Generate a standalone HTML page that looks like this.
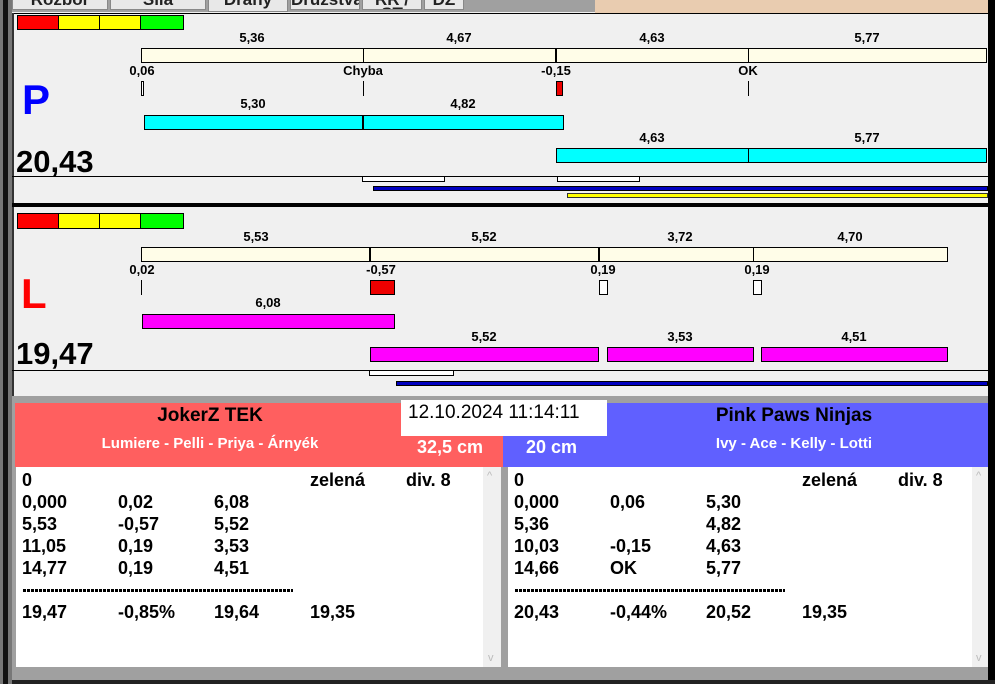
<!DOCTYPE html>
<html><head><meta charset="utf-8"><style>
*{margin:0;padding:0;box-sizing:border-box}
body{width:995px;height:684px;overflow:hidden;background:#f0f0f0;font-family:"Liberation Sans",Arial,sans-serif;position:relative}
div{position:absolute}
.b{border:1px solid #000}
.t{font-weight:bold;font-size:13px;color:#000;transform:translateX(-50%);white-space:nowrap;line-height:14px}
.L{font-weight:bold;font-size:18px;line-height:22px;white-space:nowrap}
.tab{background:#e8e8e8;border:1px solid #888;border-top:0;font-weight:bold;font-size:17px;line-height:14px;overflow:hidden;text-align:center;color:#222}
.tab span{position:relative;top:-7px}
.dash{height:3px;background:repeating-linear-gradient(90deg,#000 0 3px,transparent 3px 4px)}
</style></head><body>
<div style="left:0;top:0;width:12px;height:684px;background:#777"></div>
<div style="left:3px;top:0;width:5px;height:684px;background:#111"></div>
<div style="left:12px;top:0;width:583px;height:12px;background:#a0a0a0"></div>
<div class="tab" style="left:12px;top:0;width:96px;height:10px"><span>Rozbor</span></div>
<div class="tab" style="left:110px;top:0;width:96px;height:10px"><span>Síla</span></div>
<div class="tab" style="left:208px;top:0;width:80px;height:12px"><span>Dráhy</span></div>
<div class="tab" style="left:290px;top:0;width:70px;height:10px"><span>Družstva</span></div>
<div class="tab" style="left:362px;top:0;width:60px;height:10px"><span>RR / ST</span></div>
<div class="tab" style="left:424px;top:0;width:40px;height:10px"><span>DZ</span></div>
<div style="left:595px;top:0;width:393px;height:13px;background:#e9ccb0"></div>
<div style="left:988px;top:0;width:7px;height:684px;background:#000"></div>
<div style="left:12px;top:13px;width:976px;height:1px;background:#000"></div>
<div style="left:12px;top:13px;width:2px;height:385px;background:#333"></div>

<div style="left:17px;top:15px;width:42px;height:15px;background:#f00" class="b"></div>
<div style="left:58px;top:15px;width:42px;height:15px;background:#ff0" class="b"></div>
<div style="left:99px;top:15px;width:42px;height:15px;background:#ff0" class="b"></div>
<div style="left:140px;top:15px;width:44px;height:15px;background:#0f0" class="b"></div>

<div class="t" style="left:252px;top:31px">5,36</div><div class="t" style="left:459px;top:31px">4,67</div><div class="t" style="left:652px;top:31px">4,63</div><div class="t" style="left:867px;top:31px">5,77</div>
<div class="b" style="left:141px;top:48px;width:846px;height:15px;background:#fffde8"></div>
<div style="left:363px;top:48px;width:1px;height:15px;background:#000"></div>
<div style="left:555px;top:48px;width:2px;height:15px;background:#000"></div>
<div style="left:748px;top:48px;width:1px;height:15px;background:#000"></div>
<div class="t" style="left:142px;top:64px">0,06</div><div class="t" style="left:363px;top:64px">Chyba</div><div class="t" style="left:556px;top:64px">-0,15</div><div class="t" style="left:748px;top:64px">OK</div>
<div class="b" style="left:141px;top:81px;width:3px;height:15px;background:#fff"></div>
<div style="left:363px;top:81px;width:1px;height:15px;background:#000"></div>
<div class="b" style="left:556px;top:81px;width:7px;height:15px;background:#e00"></div>
<div style="left:748px;top:81px;width:1px;height:15px;background:#000"></div>
<div style="left:22px;top:76px;font-size:42px;font-weight:bold;color:#0000ff;line-height:48px">P</div>
<div class="t" style="left:253px;top:97px">5,30</div><div class="t" style="left:463px;top:97px">4,82</div>
<div class="b" style="left:144px;top:115px;width:420px;height:15px;background:#0ff"></div>
<div style="left:362px;top:115px;width:2px;height:15px;background:#000"></div>
<div class="t" style="left:652px;top:131px">4,63</div><div class="t" style="left:867px;top:131px">5,77</div>
<div class="b" style="left:556px;top:148px;width:431px;height:15px;background:#0ff"></div>
<div style="left:748px;top:148px;width:1px;height:15px;background:#000"></div>
<div style="left:16px;top:144px;font-size:31px;font-weight:bold;line-height:36px">20,43</div>
<div style="left:12px;top:176px;width:976px;height:1px;background:#000"></div>
<div class="b" style="left:362px;top:176px;width:83px;height:6px;background:#fff"></div>
<div class="b" style="left:557px;top:176px;width:83px;height:6px;background:#fff"></div>
<div style="left:373px;top:186px;width:615px;height:5px;background:#0000c0;border:1px solid #000"></div>
<div style="left:567px;top:193px;width:421px;height:5px;background:#ff0;border:1px solid #333"></div>
<div style="left:12px;top:203px;width:976px;height:4px;background:#000"></div>

<div style="left:17px;top:213px;width:42px;height:16px;background:#f00" class="b"></div>
<div style="left:58px;top:213px;width:42px;height:16px;background:#ff0" class="b"></div>
<div style="left:99px;top:213px;width:42px;height:16px;background:#ff0" class="b"></div>
<div style="left:140px;top:213px;width:44px;height:16px;background:#0f0" class="b"></div>
<div class="t" style="left:256px;top:230px">5,53</div><div class="t" style="left:484px;top:230px">5,52</div><div class="t" style="left:680px;top:230px">3,72</div><div class="t" style="left:850px;top:230px">4,70</div>
<div class="b" style="left:141px;top:247px;width:807px;height:15px;background:#fffde8"></div>
<div style="left:369px;top:247px;width:2px;height:15px;background:#000"></div>
<div style="left:598px;top:247px;width:2px;height:15px;background:#000"></div>
<div style="left:753px;top:247px;width:1px;height:15px;background:#000"></div>
<div class="t" style="left:142px;top:263px">0,02</div><div class="t" style="left:381px;top:263px">-0,57</div><div class="t" style="left:603px;top:263px">0,19</div><div class="t" style="left:757px;top:263px">0,19</div>
<div style="left:141px;top:280px;width:1px;height:15px;background:#000"></div>
<div class="b" style="left:370px;top:280px;width:25px;height:15px;background:#e00"></div>
<div class="b" style="left:599px;top:280px;width:9px;height:15px;background:#fff"></div>
<div class="b" style="left:753px;top:280px;width:9px;height:15px;background:#fff"></div>
<div style="left:21px;top:270px;font-size:42px;color:#f00;font-weight:bold;line-height:48px">L</div>
<div class="t" style="left:268px;top:296px">6,08</div>
<div class="b" style="left:142px;top:314px;width:253px;height:15px;background:#f0f"></div>
<div class="t" style="left:484px;top:330px">5,52</div><div class="t" style="left:680px;top:330px">3,53</div><div class="t" style="left:854px;top:330px">4,51</div>
<div class="b" style="left:370px;top:347px;width:229px;height:15px;background:#f0f"></div>
<div class="b" style="left:607px;top:347px;width:147px;height:15px;background:#f0f"></div>
<div class="b" style="left:761px;top:347px;width:187px;height:15px;background:#f0f"></div>
<div style="left:16px;top:336px;font-size:31px;font-weight:bold;line-height:36px">19,47</div>
<div style="left:12px;top:370px;width:976px;height:1px;background:#000"></div>
<div class="b" style="left:369px;top:370px;width:85px;height:6px;background:#fff"></div>
<div style="left:396px;top:381px;width:592px;height:5px;background:#0000c0;border:1px solid #000"></div>

<div style="left:12px;top:396px;width:976px;height:288px;background:#a0a0a0"></div>
<div style="left:15px;top:403px;width:488px;height:64px;background:#ff5f5f"></div>
<div style="left:503px;top:403px;width:485px;height:64px;background:#6060ff"></div>
<div style="left:15px;top:404px;width:390px;text-align:center;font-weight:bold;font-size:19px;line-height:24px">JokerZ TEK</div>
<div style="left:15px;top:435px;width:390px;text-align:center;font-weight:bold;font-size:15px;color:#fff;line-height:18px">Lumiere - Pelli - Priya - Árnyék</div>
<div style="left:417px;top:436px;font-weight:bold;font-size:18px;color:#fff;line-height:22px">32,5 cm</div>
<div style="left:526px;top:436px;font-weight:bold;font-size:18px;color:#fff;line-height:22px">20 cm</div>
<div style="left:600px;top:404px;width:388px;text-align:center;font-weight:bold;font-size:19px;line-height:24px">Pink Paws Ninjas</div>
<div style="left:600px;top:435px;width:388px;text-align:center;font-weight:bold;font-size:15px;color:#fff;line-height:18px">Ivy - Ace - Kelly - Lotti</div>
<div style="left:401px;top:400px;width:206px;height:36px;background:#fff;font-size:19px;line-height:24px;padding:1px 0 0 7px">12.10.2024 11:14:11</div>

<div style="left:16px;top:467px;width:485px;height:200px;background:#fff"></div>
<div style="left:483px;top:467px;width:18px;height:200px;background:#f0f0f0;color:#bbb;font-size:11px;text-align:center;line-height:14px"><span style="position:absolute;top:2px;left:4px">^</span><span style="position:absolute;top:184px;left:5px">v</span></div>
<div style="left:508px;top:467px;width:480px;height:200px;background:#fff"></div>
<div style="left:972px;top:467px;width:16px;height:200px;background:#f0f0f0;color:#bbb;font-size:11px;line-height:14px"><span style="position:absolute;top:2px;left:4px">^</span><span style="position:absolute;top:184px;left:4px">v</span></div>

<div class="L" style="left:22px;top:469px">0</div><div class="L" style="left:310px;top:469px">zelená</div><div class="L" style="left:406px;top:469px">div. 8</div>
<div class="L" style="left:22px;top:491px">0,000</div><div class="L" style="left:118px;top:491px">0,02</div><div class="L" style="left:214px;top:491px">6,08</div>
<div class="L" style="left:22px;top:513px">5,53</div><div class="L" style="left:118px;top:513px">-0,57</div><div class="L" style="left:214px;top:513px">5,52</div>
<div class="L" style="left:22px;top:535px">11,05</div><div class="L" style="left:118px;top:535px">0,19</div><div class="L" style="left:214px;top:535px">3,53</div>
<div class="L" style="left:22px;top:557px">14,77</div><div class="L" style="left:118px;top:557px">0,19</div><div class="L" style="left:214px;top:557px">4,51</div>
<div class="dash" style="left:23px;top:589px;width:270px"></div>
<div class="L" style="left:22px;top:601px">19,47</div><div class="L" style="left:118px;top:601px">-0,85%</div><div class="L" style="left:214px;top:601px">19,64</div><div class="L" style="left:310px;top:601px">19,35</div>

<div class="L" style="left:514px;top:469px">0</div><div class="L" style="left:802px;top:469px">zelená</div><div class="L" style="left:898px;top:469px">div. 8</div>
<div class="L" style="left:514px;top:491px">0,000</div><div class="L" style="left:610px;top:491px">0,06</div><div class="L" style="left:706px;top:491px">5,30</div>
<div class="L" style="left:514px;top:513px">5,36</div><div class="L" style="left:706px;top:513px">4,82</div>
<div class="L" style="left:514px;top:535px">10,03</div><div class="L" style="left:610px;top:535px">-0,15</div><div class="L" style="left:706px;top:535px">4,63</div>
<div class="L" style="left:514px;top:557px">14,66</div><div class="L" style="left:610px;top:557px">OK</div><div class="L" style="left:706px;top:557px">5,77</div>
<div class="dash" style="left:515px;top:589px;width:270px"></div>
<div class="L" style="left:514px;top:601px">20,43</div><div class="L" style="left:610px;top:601px">-0,44%</div><div class="L" style="left:706px;top:601px">20,52</div><div class="L" style="left:802px;top:601px">19,35</div>

<div style="left:12px;top:680px;width:983px;height:4px;background:#222"></div>
</body></html>
